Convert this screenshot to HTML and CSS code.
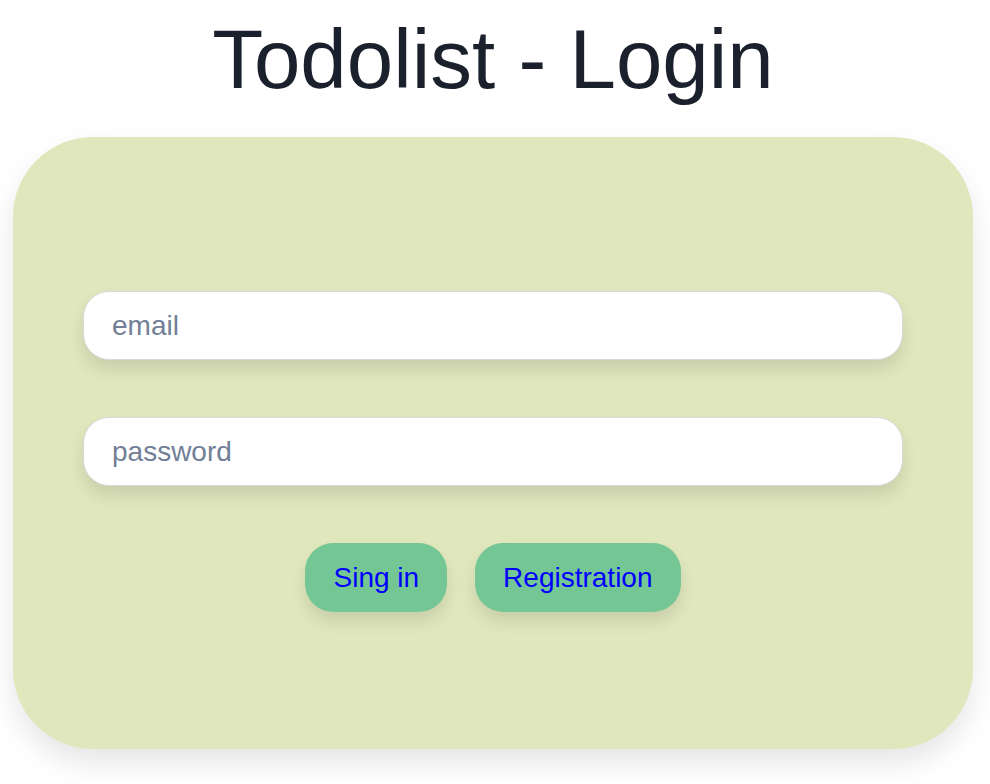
FILE: index.html
```html
<!DOCTYPE html>
<html>
<head>
<meta charset="utf-8">
<link rel="stylesheet" href="styles.css">
</head>
<body>
<div class="page">
  <h1 class="title">Todolist - Login</h1>
  <div class="card">
    <form class="form">
      <input class="field" type="text" placeholder="email">
      <input class="field" type="password" placeholder="password">
      <div class="actions">
        <button class="btn" type="button">Sing in</button>
        <button class="btn" type="button">Registration</button>
      </div>
    </form>
  </div>
</div>
</body>
</html>
```
FILE: styles.css
```css
html, body {
  margin: 0;
  padding: 0;
  background: #ffffff;
}
body {
  font-family: "Liberation Sans", Arial, sans-serif;
}
.page {
  width: 990px;
  display: flex;
  flex-direction: column;
  align-items: flex-start;
  padding-bottom: 40px;
}
.title {
  align-self: stretch;
  text-align: center;
  margin: 0;
  padding-top: 11px;
  font-size: 83.5px;
  font-weight: 400;
  line-height: 96px;
  color: #1a202c;
  padding-right: 4px;
}
.card {
  margin: 30px 0 0 13px;
  width: 960px;
  height: 612px;
  box-sizing: border-box;
  background: #e0e7bd;
  border-radius: 80px;
  box-shadow: 0 14px 28px rgba(0, 0, 0, 0.1);
  padding: 154px 70px 0 70px;
}
.form {
  display: flex;
  flex-direction: column;
  align-items: stretch;
}
.field {
  height: 69px;
  box-sizing: border-box;
  border: 1px solid #d6d9dc;
  border-radius: 26px;
  background: #ffffff;
  padding: 0 28px;
  font-family: "Liberation Sans", Arial, sans-serif;
  font-size: 28px;
  color: #2d3748;
  box-shadow: 0 10px 16px rgba(0, 0, 0, 0.1);
  outline: none;
  margin-bottom: 57px;
}
.field::placeholder {
  color: #718096;
}
.actions {
  display: flex;
  justify-content: center;
  gap: 28px;
}
.btn {
  height: 69px;
  box-sizing: border-box;
  border: none;
  border-radius: 28px;
  background: #74c794;
  color: #0000ff;
  font-family: "Liberation Sans", Arial, sans-serif;
  font-size: 28px;
  padding: 0 28px;
  box-shadow: 0 10px 16px rgba(0, 0, 0, 0.1);
}
```
